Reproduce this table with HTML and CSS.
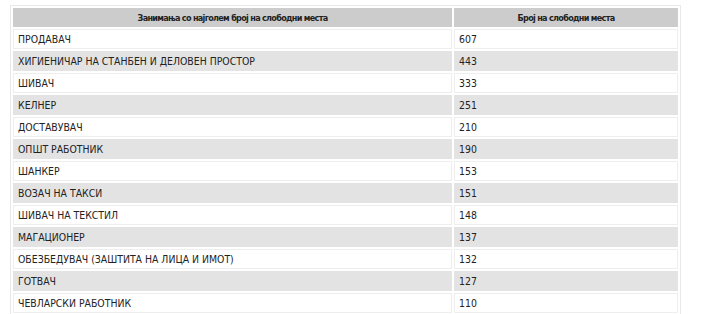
FILE: index.html
```html
<!DOCTYPE html>
<html>
    <head>
        <title>Слободни места</title>
        <link rel="stylesheet" href="styles.css">
    </head>
    <body>
        <!--Table of occupations with most vacancies-->
        <table class="JOBS_TABLE">
            <tr>
                <th class="JOBS_NAME">Занимања со најголем број на слободни места</th>
                <th class="JOBS_COUNT">Број на слободни места</th>
            </tr>
            <tr><td>ПРОДАВАЧ</td><td>607</td></tr>
            <tr><td>ХИГИЕНИЧАР НА СТАНБЕН И ДЕЛОВЕН ПРОСТОР</td><td>443</td></tr>
            <tr><td>ШИВАЧ</td><td>333</td></tr>
            <tr><td>КЕЛНЕР</td><td>251</td></tr>
            <tr><td>ДОСТАВУВАЧ</td><td>210</td></tr>
            <tr><td>ОПШТ РАБОТНИК</td><td>190</td></tr>
            <tr><td>ШАНКЕР</td><td>153</td></tr>
            <tr><td>ВОЗАЧ НА ТАКСИ</td><td>151</td></tr>
            <tr><td>ШИВАЧ НА ТЕКСТИЛ</td><td>148</td></tr>
            <tr><td>МАГАЦИОНЕР</td><td>137</td></tr>
            <tr><td>ОБЕЗБЕДУВАЧ (ЗАШТИТА НА ЛИЦА И ИМОТ)</td><td>132</td></tr>
            <tr><td>ГОТВАЧ</td><td>127</td></tr>
            <tr><td>ЧЕВЛАРСКИ РАБОТНИК</td><td>110</td></tr>
        </table>
    </body>
</html>
```

FILE: styles.css
```css
/*Header gray: #CCCCCC*/
/*Row gray: #E3E3E3*/
body {
    margin: 5px 0 0 10px;
    font-family: "DejaVu Sans Condensed", "DejaVu Sans", sans-serif;
    color: #222222;
}
.JOBS_TABLE {
    width: 671px;
    border: 1px solid #E8E8E8;
    border-spacing: 2px;
    font-size: 10.4px;
}
.JOBS_TABLE th {
    height: 19px;
    padding: 0 4px;
    background-color: #CCCCCC;
    font-size: 9px;
    font-weight: bold;
    letter-spacing: -0.7px;
    text-align: center;
}
.JOBS_NAME {
    width: 431px;
}
.JOBS_TABLE td {
    height: 18px;
    padding: 0 4px;
    border: 1px solid #EEEEEE;
    text-align: left;
}
/* Every second row is gray */
.JOBS_TABLE tr:nth-child(odd) td {
    background-color: #E3E3E3;
    border-color: #E3E3E3;
}
```
